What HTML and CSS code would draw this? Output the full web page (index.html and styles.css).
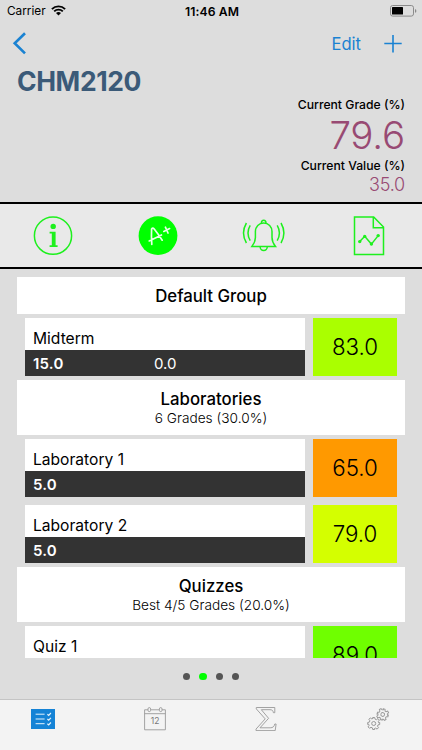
FILE: index.html
```
<!DOCTYPE html>
<html lang="en">

<head>
    <meta charset="utf-8">
    <title>CHM2120</title>
    <link rel="stylesheet" href="styles.css">
</head>

<body>

    <div class="status-bar">
        <div class="carrier">
            <span>Carrier</span>
            <svg width="15" height="11" viewBox="0 0 15 11">
                <path d="M.9 4.1a9.4 9.4 0 0 1 13.2 0M3.2 6.4a6.1 6.1 0 0 1 8.6 0" fill="none" stroke="#000" stroke-width="1.9"/>
                <path d="M7.5 10.6 5 8.1a3.6 3.6 0 0 1 5 0z"/>
            </svg>
        </div>
        <div class="time">11:46 AM</div>
        <div class="battery">
            <svg width="27" height="12" viewBox="0 0 27 12">
                <rect x=".5" y=".5" width="23" height="10.6" rx="2.2" fill="none" stroke="#8a8a8a"/>
                <rect x="2" y="2" width="11" height="7.6" rx=".6"/>
                <path d="M25 4v3.800q1.400-.6 1.400-1.900T25 4z" fill="#8a8a8a"/>
            </svg>
        </div>
    </div>

    <div class="nav">
        <svg class="back" width="14" height="23" viewBox="0 0 14 23">
            <path d="M13 1.200 2.700 11.300 13 21.400" fill="none" stroke="#1a82d2" stroke-width="2.600"/>
        </svg>
        <span class="edit">Edit</span>
        <svg width="18" height="18" viewBox="0 0 18 18">
            <path d="M9 0v17.400M.3 8.500h17.400" stroke="#1a82d2" stroke-width="1.600"/>
        </svg>
    </div>

    <div class="summary">
        <h1>CHM2120</h1>
        <div class="summary-label">Current Grade (%)</div>
        <div class="current-grade">79.6</div>
        <div class="summary-label">Current Value (%)</div>
        <div class="current-value">35.0</div>
    </div>

    <div class="toolbar">
        <svg width="40" height="40" viewBox="0 0 40 40">
            <circle cx="20" cy="19.700" r="18.600" fill="none" stroke="#1ef01e" stroke-width="1.500"/>
            <circle cx="20.200" cy="10.400" r="2.700" fill="#1ef01e"/>
            <path d="M16.600 15.800h6V29.200h2v1.700h-8v-1.700h2.200V17.500h-2.200z" fill="#1ef01e"/>
        </svg>
        <svg width="40" height="40" viewBox="0 0 40 40">
            <circle cx="20" cy="19.700" r="19.400" fill="#0f0"/>
            <g fill="none" stroke="#e9ffe9" stroke-width="1.700" stroke-linecap="round" stroke-linejoin="round">
                <path d="M13.800 28.400q-.6-9-.2-15.400 1.200-1.700 2.600 0 4 5 8 11.200M11.200 24.900q6-2.900 12.300-5.900M25.800 15.400l5.800-2.800M27.400 11.200l2.600 5.800"/>
            </g>
        </svg>
        <svg width="44" height="40" viewBox="0 0 44 40">
            <g fill="none" stroke="#1ef01e" stroke-width="1.500">
                <path d="M9.900 30.400c2.700-3.400 3.500-5 3.500-9V15.600c0-5 3.500-8.600 8.300-8.600s8.300 3.600 8.300 8.600v5.800c0 4 .8 5.600 3.500 9z"/>
                <path d="M19.400 7.200a2.300 2.900 0 1 1 4.600 0M18.100 30.600a3.600 4 0 0 0 7.200 0"/>
                <path d="M8.200 9.400q-4.400 7.500 0 15.200M4.400 7q-5.800 10 0 20M35.200 9.400q4.400 7.500 0 15.200M39 7q5.800 10 0 20"/>
            </g>
        </svg>
        <svg width="40" height="40" viewBox="0 0 40 40">
            <g fill="none" stroke="#1ef01e" stroke-width="1.500">
                <path d="M5.500 1.100h19.200L34.500 11.100v27.300H5.500zM24.300 1.100v10.600h10.200"/>
                <path d="M10.700 25.600l5-5.300 6.700 7.800 6.800-8.500"/>
            </g>
            <g fill="#1ef01e">
                <circle cx="10.700" cy="25.600" r="1.700"/>
                <circle cx="15.700" cy="20.400" r="1.700"/>
                <circle cx="22.400" cy="28" r="1.700"/>
                <circle cx="29.200" cy="19.600" r="1.700"/>
            </g>
        </svg>
    </div>

    <div class="grades">
        <div class="group single">
            <h2>Default Group</h2>
        </div>
        <div class="grade">
            <div class="grade-info">
                <div class="grade-name">Midterm</div>
                <div class="grade-weight"><b>15.0</b><span>0.0</span></div>
            </div>
            <div class="score green">83.0</div>
        </div>

        <div class="group">
            <h2>Laboratories</h2>
            <p>6 Grades (30.0%)</p>
        </div>
        <div class="grade">
            <div class="grade-info">
                <div class="grade-name">Laboratory 1</div>
                <div class="grade-weight"><b>5.0</b></div>
            </div>
            <div class="score orange">65.0</div>
        </div>
        <div class="grade">
            <div class="grade-info">
                <div class="grade-name">Laboratory 2</div>
                <div class="grade-weight"><b>5.0</b></div>
            </div>
            <div class="score yellow">79.0</div>
        </div>

        <div class="group">
            <h2>Quizzes</h2>
            <p>Best 4/5 Grades (20.0%)</p>
        </div>
        <div class="grade">
            <div class="grade-info">
                <div class="grade-name">Quiz 1</div>
                <div class="grade-weight"></div>
            </div>
            <div class="score bright">89.0</div>
        </div>
    </div>

    <div class="dots">
        <span class="dot"></span>
        <span class="dot active"></span>
        <span class="dot"></span>
        <span class="dot"></span>
    </div>

    <div class="tabs">
        <svg width="24" height="24" viewBox="0 0 24 24">
            <rect x="0" y="2" width="24" height="20" fill="#1583d6"/>
            <path d="M4.600 7.200h9M4.600 12h9M4.600 16.700h9" stroke="#e6f3fc" stroke-width="1"/>
            <path d="M16.400 7.200l1.300 1.200 2.200-2.400M16.400 12l1.300 1.200 2.200-2.400M16.400 16.700l1.300 1.200 2.200-2.400" fill="none" stroke="#e6f3fc" stroke-width="1.200"/>
        </svg>
        <svg width="24" height="24" viewBox="0 0 24 24">
            <g fill="none" stroke="#999" stroke-width=".9">
                <path d="M5 2.800H1.600v20h20.800v-20H19M8 2.800h8M1.600 6.700h20.800"/>
                <rect x="5" y=".6" width="2.600" height="4" rx="1.300"/>
                <rect x="16.400" y=".6" width="2.600" height="4" rx="1.300"/>
            </g>
            <text class="cal-day" x="12.200" y="17.300">12</text>
        </svg>
        <svg width="24" height="24" viewBox="0 0 24 24">
            <path d="M2.300.5h18.500v5.200h-1.400c-.4-2.200-1.300-3-3.400-3H7.300l7.300 8.600-8.600 9.500h10.200c2.700 0 4-1.200 4.600-3.800h1.300l-.9 6.600H2v-1.500l9.200-10.200L2.300 1.900z" fill="none" stroke="#999" stroke-width=".9"/>
        </svg>
        <svg width="24" height="24" viewBox="0 0 24 24">
            <defs>
                <path id="gear" d="M-1-6h2l.4 1.700 1.300.5 1.500-1 1.400 1.400-1 1.500.5 1.300L6-1v2l-1.700.4-.5 1.300 1 1.500-1.400 1.400-1.500-1-1.300.5L1 6h-2l-.4-1.700-1.300-.5-1.500 1-1.400-1.400 1-1.500-.5-1.300L-6 1v-2l1.700-.4.5-1.300-1-1.500 1.400-1.400 1.500 1 1.300-.5zM2 0a2 2 0 1 0-4 0 2 2 0 1 0 4 0z" fill="none" stroke="#999" stroke-width="1"/>
            </defs>
            <use href="#gear" transform="translate(7.700 16.500)"/>
            <use href="#gear" transform="translate(16.700 7.500) rotate(15) scale(.94)"/>
        </svg>
    </div>

</body>

</html>
```

FILE: styles.css
```
* {
    box-sizing: border-box;
}

body {
    margin: 0;
    width: 422px;
    height: 750px;
    overflow: hidden;
    display: flex;
    flex-direction: column;
    background: #dddddd;
    font-family: Inter, Roboto, sans-serif;
    color: #000;
}

svg {
    display: block;
}

h1, h2, p {
    margin: 0;
}

.status-bar {
    height: 22px;
    flex: none;
    display: grid;
    grid-template-columns: 1fr auto 1fr;
    align-items: center;
    padding: 0 5px 0 7px;
    font-size: 12.2px;
}

.carrier {
    display: flex;
    align-items: center;
    gap: 5px;
    font-size: 11.8px;
}

.carrier svg {
    margin-top: -1px;
}

.time {
    font-weight: 600;
    letter-spacing: .1px;
}

.battery {
    justify-self: end;
}

.nav {
    height: 43px;
    flex: none;
    display: flex;
    align-items: center;
    padding: 0 20px 0 12px;
}

.back {
    margin-right: auto;
}

.edit {
    margin-right: 23px;
    font-size: 16.6px;
    color: #1a82d2;
}

.summary {
    height: 137px;
    flex: none;
    padding: 0 17px;
    text-align: right;
}

.summary h1 {
    text-align: left;
    font-size: 26.5px;
    line-height: 32px;
    font-weight: 700;
    letter-spacing: -.4px;
    color: #3b5a78;
}

.summary-label {
    font-size: 12.2px;
    line-height: 15px;
    font-weight: 500;
}

.current-grade {
    font-size: 38.5px;
    line-height: 46px;
    font-weight: 300;
    letter-spacing: -.2px;
    color: #984a73;
}

.current-value {
    font-size: 18px;
    line-height: 23px;
    font-weight: 300;
    letter-spacing: -.2px;
    color: #984a73;
}

.toolbar {
    height: 67px;
    flex: none;
    display: grid;
    grid-template-columns: repeat(4, 1fr);
    align-items: center;
    justify-items: center;
    border-top: 2px solid #000;
    border-bottom: 2px solid #000;
    background: #e9e9e9;
}

.grades {
    height: 389px;
    flex: none;
    padding: 8px 17px 0;
    overflow: hidden;
}

.group {
    height: 55px;
    padding-top: 9px;
    background: #fff;
    text-align: center;
}

.group.single {
    height: 37px;
}

.group h2 {
    font-size: 16.8px;
    line-height: 21px;
    font-weight: 500;
}

.group p {
    font-size: 13.7px;
    line-height: 16px;
    font-weight: 300;
}

.grade {
    height: 66px;
    padding: 4px 8px;
    display: flex;
    gap: 8px;
}

.grade-info {
    width: 280px;
    background: #fff;
}

.grade-name {
    height: 32px;
    padding: 11px 8px 0;
    font-size: 15.6px;
    line-height: 20px;
}

.grade-weight {
    height: 26px;
    padding-left: 8px;
    display: grid;
    grid-template-columns: 121px 1fr;
    align-items: center;
    background: #333;
    color: #fff;
    font-size: 15px;
}

.grade-weight b {
    font-weight: 600;
    letter-spacing: .2px;
}

.score {
    width: 84px;
    font-size: 22.3px;
    line-height: 58px;
    font-weight: 300;
    text-align: center;
}

.green {
    background: #aaff00;
}

.orange {
    background: #ff9900;
}

.yellow {
    background: #d4ff00;
}

.bright {
    background: #6fff00;
}

.dots {
    height: 41px;
    flex: none;
    display: flex;
    justify-content: center;
    gap: 9px;
    padding-top: 15px;
}

.dot {
    width: 7.4px;
    height: 7.4px;
    border-radius: 50%;
    background: #555;
}

.dot.active {
    background: #0f0;
}

.tabs {
    height: 51px;
    flex: none;
    display: flex;
    justify-content: space-between;
    padding: 7px 32px 0 31px;
    border-top: 1px solid #c4c4c4;
    background: #f3f3f3;
}

.cal-day {
    font-size: 8.5px;
    text-anchor: middle;
    fill: #777;
}
```
